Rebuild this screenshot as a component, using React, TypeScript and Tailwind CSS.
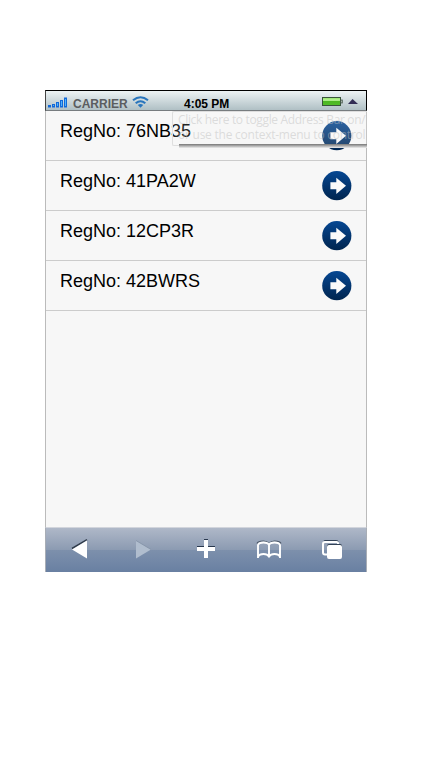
import React from "react";

const registrations = ["76NB35", "41PA2W", "12CP3R", "42BWRS"];

function Signal() {
  return (
    <svg width="20" height="11" viewBox="0 0 20 11" className="ml-[2px] mt-[6px] shrink-0">
      <defs>
        <linearGradient id="signal" x1="0" y1="0" x2="1" y2="0">
          <stop offset="0" stopColor="#1671dc" />
          <stop offset=".5" stopColor="#4db4ff" />
          <stop offset="1" stopColor="#1671dc" />
        </linearGradient>
      </defs>
      <g fill="url(#signal)" stroke="#1268d8" strokeWidth="1">
        <rect x="0.5" y="8.5" width="2" height="1.5" />
        <rect x="4.5" y="7.5" width="2" height="2.5" />
        <rect x="8.5" y="5.5" width="2" height="4.5" />
        <rect x="12.5" y="3.5" width="2" height="6.5" />
        <rect x="16.5" y="1" width="2" height="9" />
      </g>
    </svg>
  );
}

function Wifi() {
  return (
    <svg width="17" height="12" viewBox="0 0 17 12" className="ml-[4px] mt-[5px] shrink-0">
      <g fill="none" stroke="#2875bd" strokeWidth="2.1">
        <path d="M1 4.3Q8.5-1.8 16 4.3" />
        <path d="M3.7 7.3Q8.5 3.2 13.3 7.3" />
      </g>
      <path d="M5.8 8.9Q8.5 6.9 11.2 8.9L8.5 11.8Z" fill="#2875bd" />
    </svg>
  );
}

function Battery() {
  return (
    <svg width="22" height="11" viewBox="0 0 22 11" className="mt-[5px] shrink-0">
      <defs>
        <linearGradient id="charge" x1="0" y1="0" x2="0" y2="1">
          <stop offset="0" stopColor="#8fdf65" />
          <stop offset=".35" stopColor="#bdf89a" />
          <stop offset=".5" stopColor="#4cb722" />
          <stop offset="1" stopColor="#51bd29" />
        </linearGradient>
      </defs>
      <rect x=".5" y="1.5" width="18" height="8" fill="url(#charge)" stroke="#39543b" />
      <rect x="19" y="4" width="1.4" height="3" fill="#dceada" stroke="#52625a" strokeWidth=".8" />
    </svg>
  );
}

function StatusBar() {
  return (
    <header className="grid h-[21px] shrink-0 grid-cols-[138px_138px_44px] border border-t-black border-r-black border-b-[#777c7f] border-l-[#444] bg-gradient-to-b from-[#edf3f4] to-[#b0c0c5] text-[12px] leading-[14px] font-bold">
      <div className="flex">
        <Signal />
        <span className="ml-[5px] mt-[6px] text-[#5b5d60]">CARRIER</span>
        <Wifi />
      </div>
      <span className="mt-[6px] text-black">4:05 PM</span>
      <div className="flex">
        <Battery />
        <svg width="10" height="5" viewBox="0 0 10 5" className="ml-[4px] mt-[8px] shrink-0">
          <path d="M0 5L4.5 0L10 5Z" fill="#322d55" />
        </svg>
      </div>
    </header>
  );
}

function ArrowBadge() {
  return (
    <svg width="30" height="30" viewBox="0 0 30 30">
      <defs>
        <linearGradient id="badge" x1="0" y1="0" x2="0" y2="1">
          <stop offset="0" stopColor="#064792" />
          <stop offset="1" stopColor="#00254f" />
        </linearGradient>
      </defs>
      <circle cx="14.8" cy="14.7" r="14.6" fill="url(#badge)" />
      <path d="M8.4 11.3H14.3V6.7L24 14.7L14.3 23V18.2H8.4Z" fill="#fafafa" />
    </svg>
  );
}

function Toolbar() {
  return (
    <footer className="grid h-[45px] shrink-0 grid-cols-5 border-t border-r border-l border-t-[#d2d5dc] border-r-[#a8adb5] border-l-[#a8adb5] bg-[linear-gradient(180deg,#afb8c8_0%,#8c9bb2_49%,#7d90ac_50%,#6980a2_100%)]">
      <svg viewBox="0 0 64 44" className="h-[44px] w-[64px]">
        <path d="M26 20.5L41 11.7" stroke="#303b4a" strokeWidth="1.5" />
        <path d="M26 21.5L41 12.5V30.5Z" fill="white" />
      </svg>
      <svg viewBox="0 0 64 44" className="h-[44px] w-[64px]">
        <path d="M26 12.5L41 21.5L26 30.5Z" fill="#b0bdce" />
        <path d="M26 12.5L41 21.5" stroke="#8290a4" strokeWidth=".8" />
      </svg>
      <svg viewBox="0 0 64 44" className="h-[44px] w-[64px]">
        <path d="M30 11H34V18H41V20H23V18H30Z" fill="#29384e" />
        <path d="M30 12H34V19H41V23H34V30H30V23H23V19H30Z" fill="white" />
      </svg>
      <svg viewBox="0 0 64 44" className="h-[44px] w-[64px]">
        <path d="M19 15.5Q20 13 25.5 13Q29 13 31 15.5Q33 13 36.5 13Q42 13 43 15.5" fill="none" stroke="#4b5766" strokeWidth="1.2" />
        <path d="M20 30V17Q21 14.5 25.5 14.5Q30 14.5 31 17Q32 14.5 36.5 14.5Q41 14.5 42 17V30M20 28.5Q21.5 26 25.5 26Q29.5 26 31 28.5Q32.5 26 36.5 26Q40.5 26 42 28.5M31 17V28.5" fill="none" stroke="white" strokeWidth="1.9" />
      </svg>
      <svg viewBox="0 0 64 44" className="h-[44px] w-[64px]">
        <path d="M22 13.5Q22 12.5 23 12.5H34Q36 12.5 36 14" fill="none" stroke="#314156" strokeWidth="1.2" />
        <path d="M36 16V15.5Q36 14 34.5 14H23Q21 14 21 16V24.5Q21 26.5 23 26.5H25" fill="none" stroke="white" strokeWidth="2" />
        <rect x="25" y="16" width="15" height="14" rx="2" fill="#314156" />
        <rect x="25" y="17" width="15" height="14" rx="2" fill="white" />
      </svg>
    </footer>
  );
}

export default function App() {
  return (
    <div className="h-[781px] w-[422px] overflow-hidden bg-white pl-[45px] pt-[90px] font-['Liberation_Sans',Arial,sans-serif]">
      <main className="relative flex h-[482px] w-[322px] flex-col overflow-hidden bg-[#f7f7f7]">
        <StatusBar />
        <section className="h-[416px] shrink-0 border-x border-[#bbb]">
          {registrations.map((registration) => (
            <div key={registration} className="flex h-[50px] justify-between border-b border-[#ccc] pl-[14px] pr-[14px]">
              <span className="pt-[10px] text-[18px] leading-[21px] text-black">RegNo: {registration}</span>
              <div className="pt-[10px]"><ArrowBadge /></div>
            </div>
          ))}
        </section>
        <Toolbar />
        <aside className="absolute left-[127px] top-[21px] h-[35px] w-[195px] rounded-l-[2px] border border-r-0 border-[#dedede] bg-[#f8f8f8]/15 pl-[5px] font-['Open_Sans','Noto_Sans',sans-serif] text-[12px] leading-[15px] whitespace-nowrap text-[#bfbfbf]/50">
          <div className="tracking-[-0.34px]">Click here to toggle Address Bar on/</div>
          <div className="tracking-[-0.24px]">or use the context-menu to control</div>
        </aside>
        <div className="absolute left-[134px] top-[54px] h-[4px] w-[188px] bg-gradient-to-b from-[#777] to-[#eee]" />
      </main>
    </div>
  );
}
